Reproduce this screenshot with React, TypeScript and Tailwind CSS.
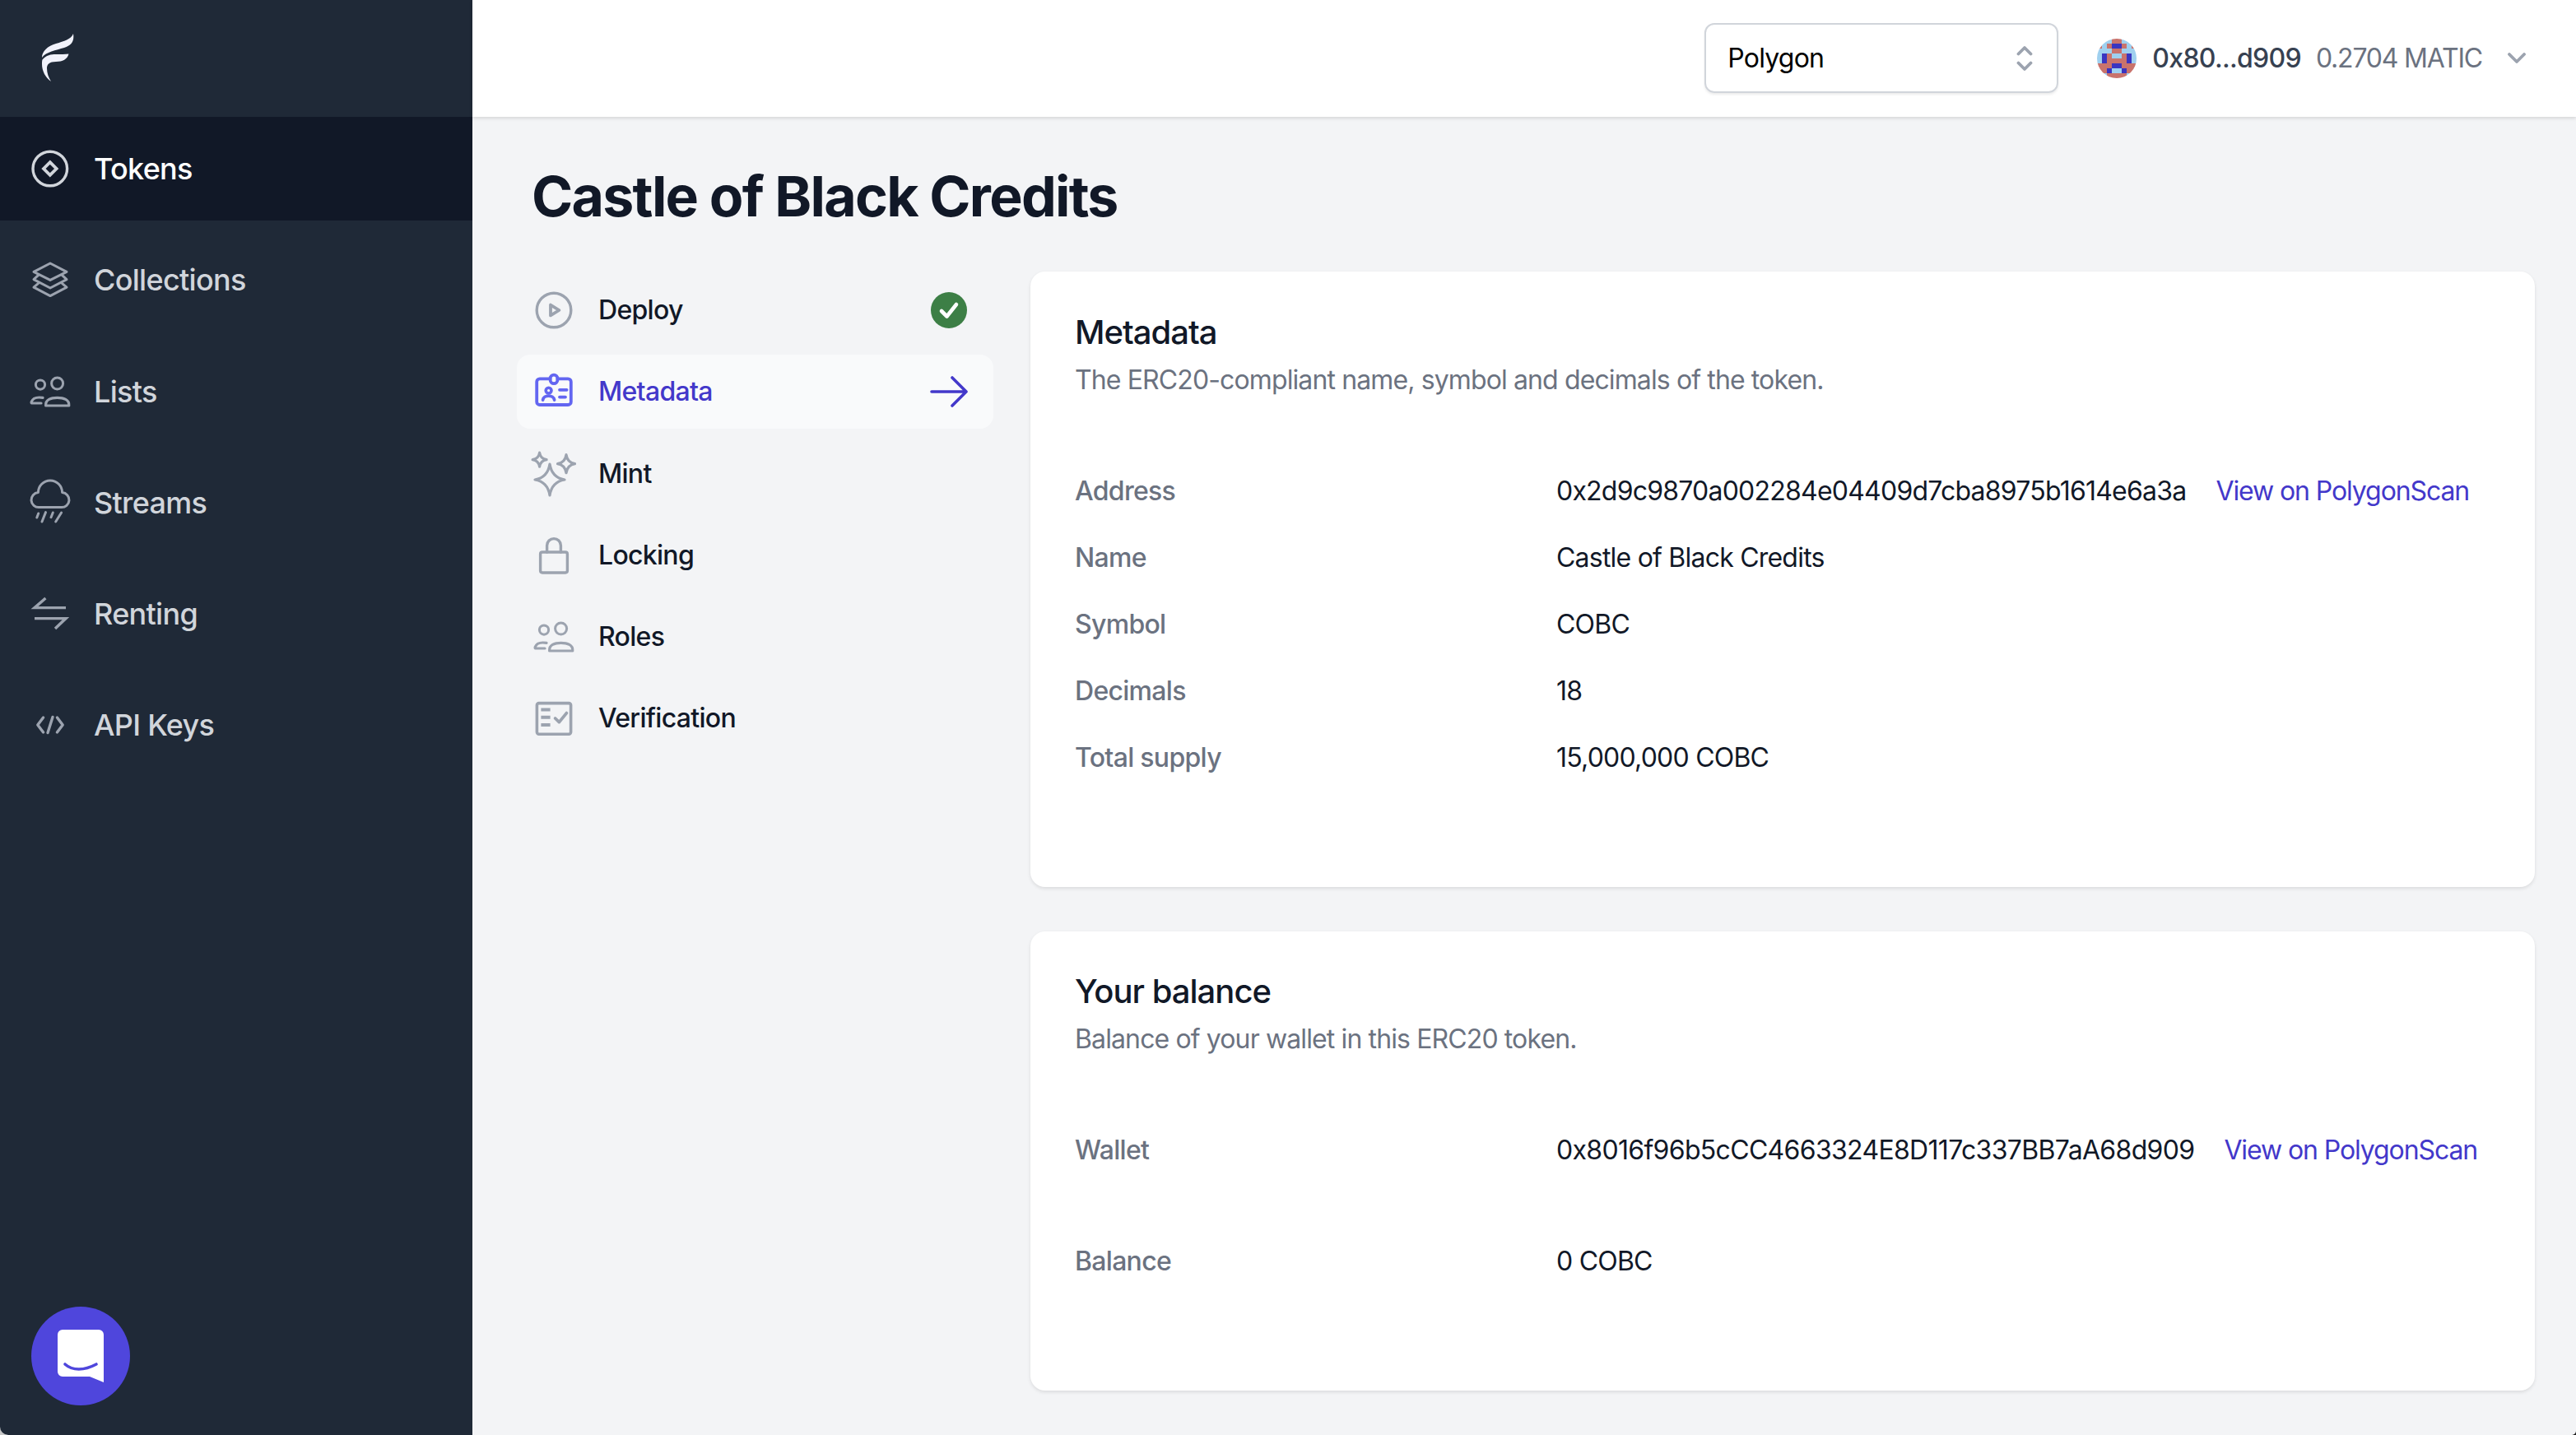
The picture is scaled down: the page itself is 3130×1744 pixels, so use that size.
import React from "react";

const inter = "font-['Inter',sans-serif]";

function Ic({ children, className = "" }: { children: React.ReactNode; className?: string }) {
  return (
    <svg viewBox="0 0 24 24" fill="none" stroke="currentColor" strokeWidth={1.7} strokeLinecap="round" strokeLinejoin="round" className={`w-[48px] h-[48px] shrink-0 overflow-visible ${className}`}>
      {children}
    </svg>
  );
}

const TokenIcon = () => (
  <Ic className="text-[#d1d5db]">
    <circle cx="11.900" cy="12" r="10.400" />
    <path d="M11.900 8.100 15.800 12 11.900 15.900 8 12Z" strokeWidth={1.9} strokeLinejoin="miter" />
  </Ic>
);
const StackIcon = () => (
  <Ic className="text-[#9ca3af]">
    <path d="M12 2 22 7.200 12 12.200 2 7.200Z" strokeWidth={1.5} />
    <path d="M4.800 9.200 2 11.800 12 17 22 11.800 19.200 9.200" strokeWidth={1.5} />
    <path d="M4.800 14.200 2 16.600 12 21.800 22 16.600 19.200 14.200" strokeWidth={1.5} />
  </Ic>
);
const UsersIcon = () => (
  <>
    <circle cx="6" cy="7.800" r="2.800" strokeWidth={1.5} />
    <circle cx="16.300" cy="7" r="3.500" strokeWidth={1.5} />
    <path d="M7.500 15.700C4.500 15.200 1.500 15.800 0.600 18.200 0.400 18.800 0.600 19 1.200 19H6.500" strokeWidth={1.6} />
    <path d="M9.300 20.500C9 16.800 12.500 15.700 16.300 15.700S23.700 16.800 23.400 20.500Z" strokeWidth={1.6} />
  </>
);
const CloudIcon = () => (
  <Ic className="text-[#9ca3af]">
    <path d="M5.300 14.800A4.500 4.500 0 0 1 4.700 5.800A6.900 6.900 0 1 1 19.300 5.800A4.500 4.500 0 0 1 18.700 14.800Z" strokeWidth={1.5} />
    <path d="M4.850 18.500 3.900 21M9.250 17.800 7 23.500M13.650 18 12.500 20.850M18.800 18 15.350 23.500" strokeWidth={1.5} />
  </Ic>
);
const RentIcon = () => (
  <Ic className="text-[#9ca3af]">
    <path d="M21.500 8.300H2.500L9.200 2.500M2.500 14.800H21.500L15 21" strokeLinecap="butt" strokeLinejoin="miter" />
  </Ic>
);
const CodeIcon = () => (
  <Ic className="text-[#9ca3af]">
    <path d="M7.800 7.500 4.400 12 7.800 16.500M16.200 7.500 19.600 12 16.200 16.500M13.500 7.200 10.500 16.800" />
  </Ic>
);
const PlayIcon = () => (
  <Ic className="text-[#9ca3af]">
    <circle cx="12" cy="12" r="10.400" />
    <path d="M10 8.800V15.200L15.200 12Z" strokeWidth={1.9} />
  </Ic>
);
const IdIcon = () => (
  <Ic className="text-[#6366f1]">
    <path d="M9.800 4.200H3.400A1.800 1.800 0 0 0 1.600 6V18.200A1.800 1.800 0 0 0 3.400 20H20.600A1.800 1.800 0 0 0 22.400 18.200V6A1.800 1.800 0 0 0 20.600 4.200H14.200" strokeWidth={1.9} />
    <rect x="9.800" y="1.800" width="4.400" height="5.300" rx="2.200" strokeWidth={1.9} />
    <circle cx="8.800" cy="11.300" r="1.700" strokeWidth={1.8} />
    <path d="M5.300 17C5.700 13.700 11.800 13.700 12.300 17M15.500 10.900H19.800M15.500 15.300H19" strokeWidth={1.9} />
  </Ic>
);

function star(cx: number, cy: number, rx: number, ry: number) {
  const k = 0.14;
  return `M${cx} ${cy - ry}Q${cx + rx * k} ${cy - ry * k} ${cx + rx} ${cy}Q${cx + rx * k} ${cy + ry * k} ${cx} ${cy + ry}Q${cx - rx * k} ${cy + ry * k} ${cx - rx} ${cy}Q${cx - rx * k} ${cy - ry * k} ${cx} ${cy - ry}Z`;
}

const SparkIcon = () => (
  <svg viewBox="0 0 56 56" fill="none" stroke="#9ca3af" strokeWidth={3.200} strokeLinejoin="round" className="w-[56px] h-[56px] shrink-0 overflow-visible">
    <path d={star(23, 35, 18, 19)} />
    <path d={star(10.600, 10.700, 8.500, 8.500)} />
    <path d={star(43, 15.700, 10.500, 11)} />
  </svg>
);
const LockIcon = () => (
  <Ic className="text-[#9ca3af]">
    <rect x="3.800" y="10" width="16.400" height="12.500" rx="1.200" />
    <path d="M7.800 10V6a4.200 4.200 0 0 1 8.400 0V10" />
  </Ic>
);
const CheckListIcon = () => (
  <Ic className="text-[#9ca3af]">
    <rect x="1.700" y="2.800" width="20.600" height="18.800" rx="1.200" strokeWidth={1.8} />
    <path d="M4.200 6.800H9.800M4.200 11.400H9.800M4.200 16H9.800" strokeLinecap="butt" strokeWidth={2} />
    <path d="M12.800 12 15.200 14.300 19.700 8.800" strokeWidth={1.9} />
  </Ic>
);

function Logo() {
  return (
    <svg viewBox="0 0 40 58" className="w-[40px] h-[58px]" fill="#f1f2fb">
      <path d="M39 0C40.500 9 37 14 28 17 18 20 6 22 1 29 1 21 8 15 18 12 28 9 36 7 39 0Z" />
      <path d="M33.500 24.500C32 31 26 34 18 34 10 34 7 37 7 42 7 48 9 53 12 58 5 53 1 45 1 37 1 35 1 33 1.500 31.500 6 26 12 25 18 25 24 25 29 25 33.500 24.500Z" />
    </svg>
  );
}

const sideItems: [string, React.ReactNode, boolean][] = [
  ["Tokens", <TokenIcon />, true],
  ["Collections", <StackIcon />, false],
  ["Lists", <Ic className="text-[#9ca3af]"><UsersIcon /></Ic>, false],
  ["Streams", <CloudIcon />, false],
  ["Renting", <RentIcon />, false],
  ["API Keys", <CodeIcon />, false],
];

function Sidebar() {
  return (
    <aside className="w-[574px] shrink-0 bg-[#1f2937] flex flex-col">
      <div className="h-[142px] pl-[50px] pt-[41px] shrink-0">
        <Logo />
      </div>
      <nav className="flex flex-col gap-[9.300px]">
        {sideItems.map(([name, icon, active]) => (
          <div key={name} className={`h-[126px] flex items-center pl-[37px] gap-[29px] text-[36px] font-medium tracking-[-0.7px] ${active ? "bg-[#111827] text-white" : "text-[#d1d5db]"}`}>
            {icon}
            <span>{name}</span>
          </div>
        ))}
      </nav>
      <div className="mt-auto mb-[36px] ml-[38px] w-[120px] h-[120px] rounded-full bg-[#4f46dc] flex items-center justify-center">
        <svg viewBox="0 0 56 64" className="w-[56px] h-[64px]">
          <path d="M6 0H50A6 6 0 0 1 56 6V64L39 57H6A6 6 0 0 1 0 51V6A6 6 0 0 1 6 0Z" fill="#fff" />
          <path d="M9 42C18 50 32 50 47 42" fill="none" stroke="#4f46dc" strokeWidth={3.600} strokeLinecap="round" />
        </svg>
      </div>
    </aside>
  );
}

function Avatar() {
  const B = "#3a35c0", R = "#c9736c", L = "#9fd0ef";
  const rows = [
    [L, L, L, R, R, L, L, L],
    [R, L, R, B, B, R, L, R],
    [L, L, L, R, R, L, L, L],
    [L, B, R, L, L, R, B, L],
    [L, B, R, R, R, R, B, L],
    [R, R, R, B, B, R, R, R],
    [R, R, B, L, L, B, R, R],
    [L, L, R, R, R, R, L, L],
  ];
  return (
    <svg viewBox="0 0 8 8" className="w-[48px] h-[48px] rounded-full shrink-0">
      {rows.flatMap((r, y) => r.map((c, x) => <rect key={`${x}-${y}`} x={x} y={y} width={1.020} height={1.020} fill={c} />))}
    </svg>
  );
}

function Header() {
  return (
    <header className="h-[142px] shrink-0 bg-white shadow-[0_2px_4px_rgba(0,0,0,0.12)] flex items-center relative">
      <div className="ml-auto w-[430px] h-[85px] border-2 border-[#d1d5db] rounded-[12px] shadow-[0_2px_3px_rgba(0,0,0,0.08)] flex items-center pl-[26px] pr-[29px] justify-between text-[32px] tracking-[-0.8px] text-black mt-[-1px]">
        <span>Polygon</span>
        <svg viewBox="0 0 20 32" className="w-[20px] h-[32px] text-[#9ca3af]" fill="none" stroke="currentColor" strokeWidth={3.800} strokeLinecap="round" strokeLinejoin="round">
          <path d="M2.500 10.500 10 3 17.500 10.500M2.500 21.500 10 29 17.500 21.500" />
        </svg>
      </div>
      <div className="ml-[47px] flex items-center text-[32px] mr-[61px]">
        <Avatar />
        <span className="ml-[19px] font-medium text-[#374151] tracking-[-0.7px]">0x80...d909</span>
        <span className="ml-[18px] text-[#6b7280] tracking-[-1.2px]">0.2704 MATIC</span>
        <svg viewBox="0 0 22 14" className="ml-[31px] w-[22px] h-[14px] text-[#9ca3af]" fill="none" stroke="currentColor" strokeWidth={3.800} strokeLinecap="round" strokeLinejoin="round">
          <path d="M2 2 11 11 20 2" />
        </svg>
      </div>
    </header>
  );
}

const subItems: [string, React.ReactNode][] = [
  ["Deploy", <PlayIcon />],
  ["Metadata", <IdIcon />],
  ["Mint", <SparkIcon />],
  ["Locking", <LockIcon />],
  ["Roles", <Ic className="text-[#9ca3af]"><UsersIcon /></Ic>],
  ["Verification", <CheckListIcon />],
];

function SubNav() {
  return (
    <nav className="w-[579px] shrink-0 flex flex-col gap-[9.300px]">
      {subItems.map(([name, icon]) => {
        const active = name === "Metadata";
        return (
          <div key={name} className={`h-[90px] flex items-center rounded-[16px] text-[32px] font-medium tracking-[-0.7px] ${active ? "bg-[#f9fafb] text-[#4338ca]" : "text-[#111827]"}`}>
            <span className="w-[90px] flex justify-center shrink-0">{icon}</span>
            <span className="ml-[9px]">{name}</span>
            {name === "Deploy" && (
              <svg viewBox="0 0 44 44" className="ml-auto mr-[32px] w-[44px] h-[44px]">
                <circle cx="22" cy="22" r="22" fill="#3d7f46" />
                <path d="M13 23 19.500 29.500 31 15" fill="none" stroke="#fff" strokeWidth={4.600} strokeLinecap="round" strokeLinejoin="round" />
              </svg>
            )}
            {active && (
              <svg viewBox="0 0 46 38" className="ml-auto mr-[31px] w-[46px] h-[38px]" fill="none" stroke="#4338ca" strokeWidth={3.600} strokeLinecap="round" strokeLinejoin="round">
                <path d="M2 19H44M27 2 44 19 27 36" />
              </svg>
            )}
          </div>
        );
      })}
    </nav>
  );
}

function Row({ label, value, link, wide }: { label: string; value: string; link?: boolean; wide?: boolean }) {
  return (
    <div className="flex items-center h-[48px] text-[32px]">
      <div className="w-[585px] shrink-0 text-[#6b7280] font-medium tracking-[-0.7px]">{label}</div>
      <div className={`text-[#111827] ${wide ? "tracking-[-0.68px]" : "tracking-[-0.78px]"}`}>{value}</div>
      {link && <div className="ml-[36px] text-[#4338ca] tracking-[-1.1px]">View on PolygonScan</div>}
    </div>
  );
}

function Card({ title, desc, children, className = "" }: { title: string; desc: string; children: React.ReactNode; className?: string }) {
  return (
    <section className={`bg-white rounded-[18px] shadow-[0_2px_4px_rgba(0,0,0,0.1)] pl-[54px] ${className}`}>
      <h2 className="text-[40px] font-medium text-[#111827] leading-[56px] tracking-[-1px]">{title}</h2>
      <p className="text-[32px] text-[#6b7280] leading-[48px] mt-[6px] tracking-[-0.88px]">{desc}</p>
      {children}
    </section>
  );
}

export default function App() {
  return (
    <div className="w-[3130px] h-[1744px] bg-[linear-gradient(to_right,#c8c8c8_50%,#1a1a1a_50%)]">
      <div className={`w-full h-full flex overflow-hidden rounded-bl-[10px] rounded-br-[5px] bg-[#f3f4f6] ${inter}`}>
        <Sidebar />
        <div className="flex-1 flex flex-col min-w-0">
          <Header />
          <main className="flex-1 pl-[54px] pr-[50px]">
            <h1 className="ml-[18px] text-[68px] font-bold text-[#111827] leading-[80px] mt-[56px] tracking-[-1.75px]">Castle of Black Credits</h1>
            <div className="flex mt-[54px]">
              <SubNav />
              <div className="ml-[45px] flex-1 flex flex-col gap-[54px] mt-[-2px]">
                <Card title="Metadata" desc="The ERC20-compliant name, symbol and decimals of the token." className="h-[748px] pt-[46px]">
                  <div className="mt-[87px] flex flex-col gap-[33px]">
                    <Row label="Address" value="0x2d9c9870a002284e04409d7cba8975b1614e6a3a" link />
                    <Row label="Name" value="Castle of Black Credits" />
                    <Row label="Symbol" value="COBC" />
                    <Row label="Decimals" value="18" />
                    <Row label="Total supply" value="15,000,000 COBC" />
                  </div>
                </Card>
                <Card title="Your balance" desc="Balance of your wallet in this ERC20 token." className="h-[558px] pt-[45px]">
                  <div className="mt-[87px] flex flex-col gap-[87px]">
                    <Row label="Wallet" value="0x8016f96b5cCC4663324E8D117c337BB7aA68d909" link wide />
                    <Row label="Balance" value="0 COBC" />
                  </div>
                </Card>
              </div>
            </div>
          </main>
        </div>
      </div>
    </div>
  );
}
